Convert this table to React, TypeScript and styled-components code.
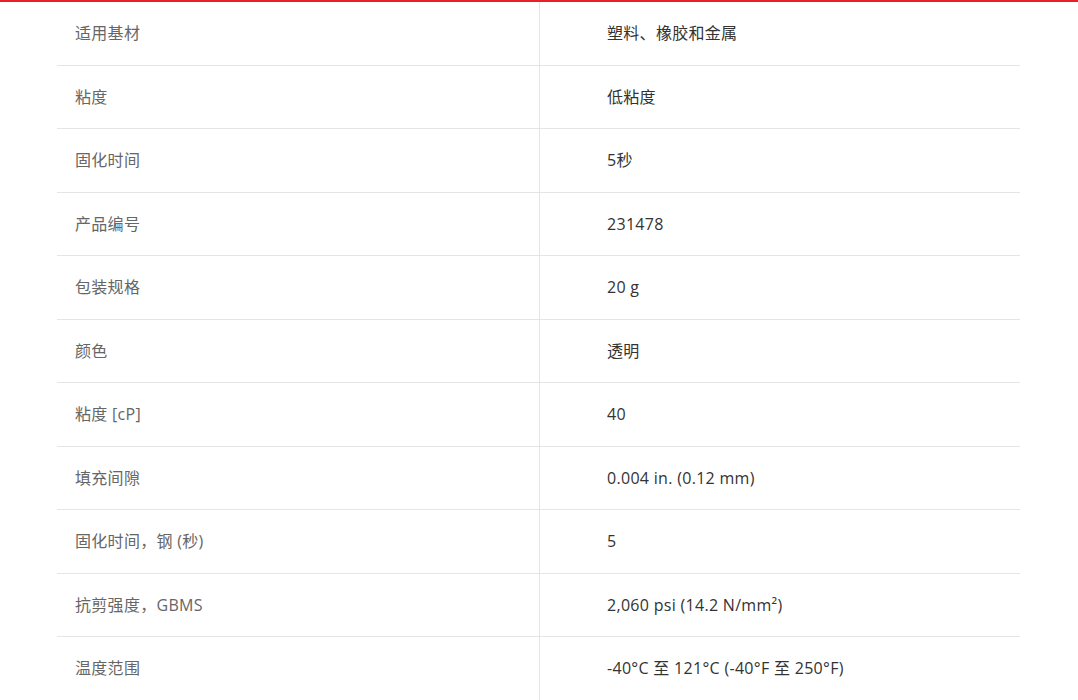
import React from 'react';
import styled, { createGlobalStyle } from 'styled-components';

interface Spec {
  label: string;
  value: string;
}

const specs: Spec[] = [
  { label: '适用基材', value: '塑料、橡胶和金属' },
  { label: '粘度', value: '低粘度' },
  { label: '固化时间', value: '5秒' },
  { label: '产品编号', value: '231478' },
  { label: '包装规格', value: '20 g' },
  { label: '颜色', value: '透明' },
  { label: '粘度 [cP]', value: '40' },
  { label: '填充间隙', value: '0.004 in. (0.12 mm)' },
  { label: '固化时间，钢 (秒)', value: '5' },
  { label: '抗剪强度，GBMS', value: '2,060 psi (14.2 N/mm²)' },
  { label: '温度范围', value: '-40°C 至 121°C (-40°F 至 250°F)' },
];

const GlobalStyle = createGlobalStyle`
  html, body {
    margin: 0;
    padding: 0;
    background: #fff;
  }
  body {
    font-family: "Open Sans", "Noto Sans CJK SC", sans-serif;
    font-size: 16px;
  }
`;

const Page = styled.div`
  width: 1078px;
  height: 700px;
  overflow: hidden;
  border-top: 2px solid #e8202a;
  box-sizing: border-box;
`;

const Table = styled.div`
  margin: 0 58px 0 57px;
  display: flex;
  flex-direction: column;
`;

const Row = styled.div`
  display: grid;
  grid-template-columns: 482px 1fr;
  height: 63.5px;
  box-sizing: border-box;
  border-bottom: 1px solid #e5e5e5;
`;

const Cell = styled.div<{ $value?: boolean }>`
  display: flex;
  align-items: center;
  padding-left: ${props => (props.$value ? '67px' : '18px')};
  color: ${props => (props.$value ? '#333' : '#666')};
  border-left: ${props => (props.$value ? '1px solid #e5e5e5' : 'none')};
  line-height: 1;
  letter-spacing: 0.3px;
  white-space: nowrap;
`;

export default function App() {
  return (
    <Page>
      <GlobalStyle />
      <Table>
        {specs.map(spec => (
          <Row key={spec.label}>
            <Cell>{spec.label}</Cell>
            <Cell $value>{spec.value}</Cell>
          </Row>
        ))}
      </Table>
    </Page>
  );
}
